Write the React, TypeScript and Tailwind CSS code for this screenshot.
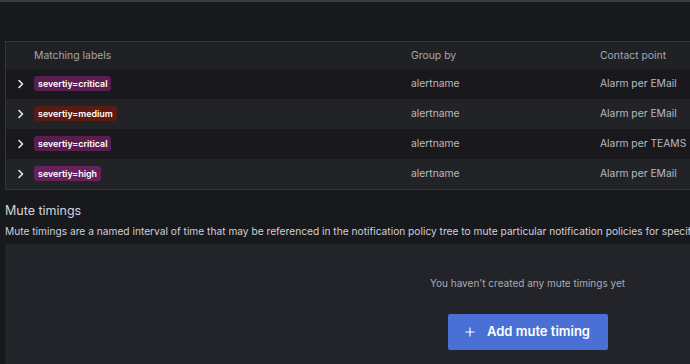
const rows = [
  { label: "severtiy=critical", color: "bg-[#5a1d4f]", group: "alertname", contact: "Alarm per EMail", bg: "bg-[#19191d]" },
  { label: "severtiy=medium", color: "bg-[#5b1a12]", group: "alertname", contact: "Alarm per EMail", bg: "bg-[#222327]" },
  { label: "severtiy=critical", color: "bg-[#5a1d4f]", group: "alertname", contact: "Alarm per TEAMS", bg: "bg-[#19191d]" },
  { label: "severtiy=high", color: "bg-[#66205b]", group: "alertname", contact: "Alarm per EMail", bg: "bg-[#222327]" },
];

function Chevron() {
  return (
    <svg width="8" height="10" viewBox="0 0 8 10" fill="none">
      <polyline points="2,1.5 5.5,5 2,8.5" stroke="#e8e8ee" strokeWidth="1.6" strokeLinecap="round" strokeLinejoin="round" />
    </svg>
  );
}

export default function App() {
  return (
    <div
      className="w-[690px] h-[364px] overflow-hidden bg-[#18191d] text-[#ccccd4]"
      style={{ fontFamily: "Inter, 'Noto Sans', sans-serif" }}
    >
      <div className="h-[2px] bg-[#3c3d42]" />
      <div className="w-[1050px] pl-[5px] pt-[39px]">
        <div className="border border-[#35363b]">
          <div className="grid grid-cols-[28px_377px_189px_1fr] h-[27px] items-center bg-[#202125] text-[10.4px] text-[#a4a5ad]">
            <div />
            <div>Matching labels</div>
            <div>Group by</div>
            <div>Contact point</div>
          </div>
          {rows.map((r, i) => (
            <div
              key={i}
              className={`grid grid-cols-[28px_377px_189px_1fr] h-[30px] items-center text-[10.3px] text-[#b9bac1] ${r.bg}`}
            >
              <div className="flex justify-center pl-[2px]">
                <Chevron />
              </div>
              <div>
                <span className={`inline-flex items-center h-[15px] px-[4px] rounded-[3px] text-[8.9px] font-semibold text-white ${r.color}`}>
                  {r.label}
                </span>
              </div>
              <div>{r.group}</div>
              <div>{r.contact}</div>
            </div>
          ))}
        </div>

        <h3 className="mt-[12px] text-[12.5px] leading-[18px] text-[#d4d4dc]">Mute timings</h3>
        <p className="mt-[4px] text-[10.2px] leading-[14px] whitespace-nowrap text-[#d0d0d8]">
          Mute timings are a named interval of time that may be referenced in the notification policy tree to mute particular notification policies for specific times of the year.
        </p>

        <div className="mt-[6px] h-[120px] bg-[#232429] flex flex-col items-center pt-[32px]">
          <div className="text-[10px] text-[#a9aab2]">You haven't created any mute timings yet</div>
          <button className="mt-[23px] w-[160px] h-[36px] rounded-[2px] bg-[#4a70d6] text-white flex items-center justify-center gap-[12px] text-[13px] font-semibold">
            <svg width="10" height="10" viewBox="0 0 10 10">
              <path d="M5 0.5V9.5M0.5 5H9.5" stroke="white" strokeWidth="1.2" />
            </svg>
            Add mute timing
          </button>
        </div>
      </div>
    </div>
  );
}
